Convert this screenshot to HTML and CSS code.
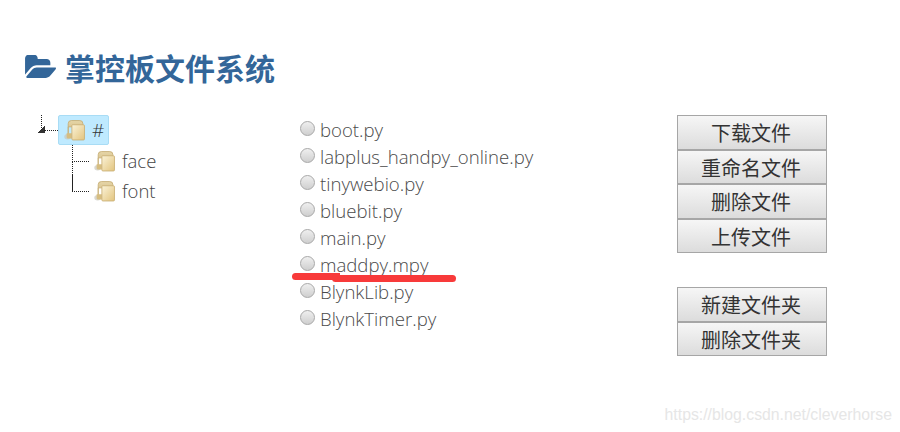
FILE: index.html
```html
<!DOCTYPE html>
<html lang="zh-CN">
<head>
<meta charset="utf-8">
<title>掌控板文件系统</title>
<link rel="stylesheet" href="styles.css">
</head>
<body>
<svg class="defs" width="0" height="0" aria-hidden="true">
  <defs>
    <linearGradient id="fg" x1="0" y1="0" x2="1" y2="1">
      <stop offset="0" stop-color="#fbf3d8"/>
      <stop offset="1" stop-color="#e2c47e"/>
    </linearGradient>
    <linearGradient id="bg" x1="0" y1="0" x2="0" y2="1">
      <stop offset="0" stop-color="#e6d6a8"/>
      <stop offset="1" stop-color="#c9ae72"/>
    </linearGradient>
    <symbol id="folder" viewBox="0 0 20 20">
      <ellipse cx="3.500" cy="16.500" rx="3.200" ry="2.600" fill="#c8c6bc" opacity=".7"/>
      <path d="M4 17V4q0-3 3-3h8q3 0 3 3v3H4z" fill="url(#bg)" stroke="#c5ab72" stroke-width=".8"/>
      <path d="M2.500 13h5v5h-4q-1 0-1-1z" fill="#d6bd80"/>
      <path d="M8 5h10.500q1 0 1 1v12.500q0 1-1 1H8.500q-1 0-1-1V6q0-1 .5-1z" fill="url(#fg)" stroke="#c9ae72" stroke-width=".8"/>
    </symbol>
  </defs>
</svg>
<main class="page">
  <h1 class="title">
    <svg class="title-icon" viewBox="0 0 1943 1500" aria-hidden="true">
      <path transform="translate(0 -152)" d="M1943 952q0 31-31 66l-336 396q-43 51-120.500 86.500t-143.500 35.500h-1088q-34 0-60.500-13t-26.500-43q0-31 31-66l336-396q43-51 120.500-86.500t143.500-35.500h1088q34 0 60.500 13t26.500 43zm-343-344v160h-832q-94 0-197 47.500t-164 119.500l-337 396-5 6q0-4-.5-12.500t-.5-12.500v-960q0-92 66-158t158-66h320q92 0 158 66t66 158v32h544q92 0 158 66t66 158z"/>
    </svg>
    <span>掌控板文件系统</span>
  </h1>
  <div class="columns">
    <section class="tree">
      <div class="root-row">
        <span class="toggle" aria-hidden="true"></span>
        <span class="node node-selected"><svg class="folder"><use href="#folder"/></svg><span class="hash">#</span></span>
      </div>
      <ul class="children">
        <li class="child"><span class="node"><svg class="folder"><use href="#folder"/></svg><span>face</span></span></li>
        <li class="child"><span class="node"><svg class="folder"><use href="#folder"/></svg><span>font</span></span></li>
      </ul>
    </section>
    <section class="files">
      <label class="file"><span class="radio"></span>boot.py</label>
      <label class="file"><span class="radio"></span>labplus_handpy_online.py</label>
      <label class="file"><span class="radio"></span>tinywebio.py</label>
      <label class="file"><span class="radio"></span>bluebit.py</label>
      <label class="file"><span class="radio"></span>main.py</label>
      <label class="file"><span class="radio"></span>maddpy.mpy</label>
      <label class="file"><span class="radio"></span>BlynkLib.py</label>
      <label class="file"><span class="radio"></span>BlynkTimer.py</label>
      <span class="red-mark" aria-hidden="true"></span>
    </section>
    <section class="actions">
      <div class="btn-group">
        <button class="btn">下载文件</button>
        <button class="btn">重命名文件</button>
        <button class="btn">删除文件</button>
        <button class="btn">上传文件</button>
      </div>
      <div class="btn-group">
        <button class="btn">新建文件夹</button>
        <button class="btn">删除文件夹</button>
      </div>
    </section>
  </div>
</main>
<div class="watermark">https://blog.csdn.net/cleverhorse</div>
</body>
</html>
```
FILE: styles.css
```css
* { box-sizing: border-box; }
html, body { margin: 0; height: 100%; }
body {
  background: #fff;
  font-family: "Open Sans", "Noto Sans CJK SC", sans-serif;
  font-weight: 300;
  color: #444;
  overflow: hidden;
  position: relative;
}
.defs { position: absolute; }
.page { padding: 45px 0 0 24px; }
.title {
  margin: 0;
  height: 44px;
  display: flex;
  align-items: center;
  gap: 9px;
  font-family: "Noto Sans CJK SC", sans-serif;
  font-size: 30px;
  font-weight: 700;
  line-height: 44px;
  color: #336699;
}
.title-icon { width: 32px; height: 25px; fill: #336699; flex: none; }
.columns { display: flex; margin-top: 26px; }

.tree { width: 276px; padding-left: 12px; font-size: 18.500px; }
.root-row { display: flex; height: 30px; position: relative; }
.toggle {
  width: 22px;
  flex: none;
  position: relative;
}
.toggle::before {
  content: "";
  position: absolute;
  left: 5px;
  top: 0;
  height: 15px;
  border-left: 1px dotted #222;
}
.toggle::after {
  content: "";
  position: absolute;
  left: 8px;
  top: 15px;
  width: 14px;
  border-top: 1px dotted #222;
}
.root-row .toggle { background: linear-gradient(135deg, transparent 50%, #333 50%) 2px 11px / 7px 7px no-repeat; }
.node {
  display: inline-flex;
  align-items: center;
  height: 30px;
  line-height: 30px;
  white-space: nowrap;
  color: #444;
}
.node-selected {
  width: 51px;
  padding-left: 5px;
  background: #bfeaff;
  border: 1px solid #a8dcf5;
  border-radius: 2px;
}
.folder { width: 21px; height: 24px; margin-right: 7px; flex: none; }
.hash { font-size: 19px; color: #333; }
.children {
  list-style: none;
  margin: 0 0 0 36px;
  padding: 0;
}
.child {
  height: 30px;
  padding-left: 22px;
  position: relative;
  display: flex;
  align-items: center;
  top: 1px;
}
.child .folder { margin-right: 7px; }
.child::before {
  content: "";
  position: absolute;
  left: 0;
  top: -1px;
  height: 16px;
  width: 16px;
  border-left: 1px dotted #222;
  border-bottom: 1px dotted #222;
}
.child:first-child::after {
  content: "";
  position: absolute;
  left: 0;
  top: 15px;
  height: 30px;
  border-left: 1px dotted #222;
}

.files { width: 377px; position: relative; padding-top: 1px; }
.file {
  display: flex;
  align-items: center;
  height: 27px;
  font-size: 18.600px;
  white-space: nowrap;
  color: #4a4a4a;
}
.radio {
  width: 15px;
  height: 15px;
  margin: -3px 5px 0 0;
  border-radius: 50%;
  border: 1px solid #a8a8a8;
  background: linear-gradient(#efefef, #cfcfcf);
  flex: none;
}
.red-mark {
  position: absolute;
  left: -8px;
  top: 158px;
  width: 48px;
  height: 7px;
  background: #f83a3a;
  border-radius: 3.500px 0 0 3.500px;
}
.red-mark::after {
  content: "";
  position: absolute;
  left: 40px;
  top: 1.500px;
  width: 124px;
  height: 7px;
  background: #f83a3a;
  border-radius: 3.500px;
}

.actions { width: 150px; display: flex; flex-direction: column; gap: 33.600px; }
.btn-group { display: flex; flex-direction: column; }
.btn {
  width: 150px;
  height: 34.600px;
  padding: 1px 2px 0 0;
  border: 1px solid #a6a6a6;
  border-radius: 0;
  background: linear-gradient(#f6f6f6, #dcdcdc);
  font-family: "Noto Sans CJK SC", sans-serif;
  font-size: 20px;
  font-weight: 400;
  color: #333;
}
.watermark {
  position: absolute;
  right: 8px;
  bottom: 8px;
  font-family: "Liberation Sans", sans-serif;
  font-size: 15.800px;
  font-weight: 400;
  color: #e6e6e6;
  white-space: nowrap;
}
```
